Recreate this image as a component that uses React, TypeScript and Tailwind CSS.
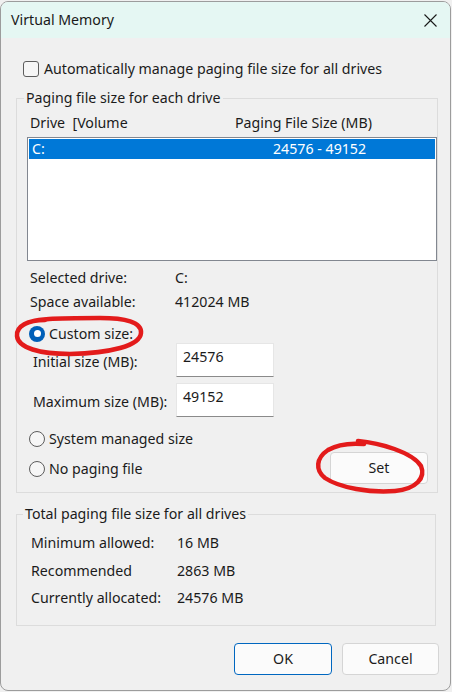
import React from "react";

const font = "font-['Segoe_UI','Noto_Sans',sans-serif]";

function Radio({ checked }: { checked?: boolean }) {
  return checked ? (
    <span className="w-[16px] h-[16px] rounded-full bg-[#005fb8] flex items-center justify-center shrink-0">
      <span className="w-[7px] h-[7px] rounded-full bg-white" />
    </span>
  ) : (
    <span className="w-[16px] h-[16px] rounded-full border border-[#5d5d5d] bg-[#f6f6f6] shrink-0" />
  );
}

export default function App() {
  return (
    <div className={`relative w-[452px] h-[692px] bg-[#f0f0f0] overflow-hidden ${font} text-[14.2px] text-[#1b1b1b]`}>
      {/* parent dialog fragments peeking at the very top */}
      <div className="h-[1px] overflow-hidden">
        <div className="-mt-[14px] h-[16px] flex text-[14px] leading-[16px] text-[#333]">
          <span className="ml-[-8px]">Visual Effects</span>
          <span className="ml-[60px]">Data Execution Prevention</span>
        </div>
      </div>

      {/* window */}
      <div className="w-[451px] h-[690px] border border-[#9c9c9c] rounded-[8px] overflow-hidden bg-[#f0f0f0] flex flex-col">
        {/* title bar */}
        <div className="h-[36px] bg-[#e5f7f3] flex items-center justify-between pl-[10px] pr-[13px] shrink-0">
          <span className="text-[14.2px] text-[#1a1a1a]">Virtual Memory</span>
          <svg width="13" height="13" viewBox="0 0 13 13">
            <path d="M0.5 0.5 L12.5 12.5 M12.5 0.5 L0.5 12.5" stroke="#1a1a1a" strokeWidth="1.1" fill="none" />
          </svg>
        </div>

        {/* body */}
        <div className="pl-[15px] pr-[14px] flex flex-col">
          {/* checkbox row */}
          <div className="mt-[21px] h-[20px] flex items-center ml-[7px]">
            <span className="w-[16px] h-[16px] rounded-[3px] border border-[#5d5d5d] bg-[#f6f6f6] shrink-0" />
            <span className="ml-[5px]">Automatically manage paging file size for all drives</span>
          </div>

          {/* group 1 */}
          <fieldset className="mt-[9px] border border-[#dcdcdc] pb-[13px]">
            <legend className="ml-[7px] px-[2px] h-[20px] leading-[20px]">Paging file size for each drive</legend>
            <div className="mt-[5px] h-[20px] flex items-center pl-[13px]">
              <span className="w-[205px]">Drive&nbsp;&nbsp;[Volume</span>
              <span>Paging File Size (MB)</span>
            </div>
            <div className="mt-[4px] ml-[10px] w-[410px] h-[124px] border border-[#828790] bg-white p-[1px]">
              <div className="h-[20px] bg-[#0078d7] text-white flex items-center pl-[3px]">
                <span className="w-[241px]">C:</span>
                <span>24576 - 49152</span>
              </div>
            </div>

            <div className="mt-[7px] h-[20px] flex items-center pl-[13px]">
              <span className="w-[145px]">Selected drive:</span>
              <span>C:</span>
            </div>
            <div className="mt-[4px] h-[20px] flex items-center pl-[13px]">
              <span className="w-[145px]">Space available:</span>
              <span>412024 MB</span>
            </div>

            <div className="mt-[12px] h-[19px] flex items-center pl-[12px]">
              <Radio checked />
              <span className="ml-[4px]">Custom size:</span>
            </div>
            <div className="h-[34px] flex items-center pl-[16px]">
              <span className="w-[143px] mt-[4px]">Initial size (MB):</span>
              <div className="w-[98px] h-[34px] bg-white border border-[#e6e6e6] border-b-[#8a8a8a] pl-[6px] pt-[3px] leading-[20px]">24576</div>
            </div>
            <div className="mt-[6px] h-[34px] flex items-center pl-[16px]">
              <span className="w-[143px] mt-[4px]">Maximum size (MB):</span>
              <div className="w-[98px] h-[34px] bg-white border border-[#e6e6e6] border-b-[#8a8a8a] pl-[6px] pt-[3px] leading-[20px]">49152</div>
            </div>

            <div className="mt-[12px] h-[20px] flex items-center pl-[12px]">
              <Radio />
              <span className="ml-[4px]">System managed size</span>
            </div>
            <div className="mt-[10px] h-[20px] flex items-center justify-between pl-[12px] pr-[9px]">
              <div className="flex items-center">
                <Radio />
                <span className="ml-[4px]">No paging file</span>
              </div>
              <div className="w-[98px] h-[32px] -mt-[2px] rounded-[4px] border border-[#d5d5d5] bg-[#fbfbfb] flex items-center justify-center">
                Set
              </div>
            </div>
          </fieldset>

          {/* group 2 */}
          <fieldset className="mt-[11px] border border-[#dcdcdc] pb-[17px]">
            <legend className="ml-[6px] px-[2px] h-[20px] leading-[20px]">Total paging file size for all drives</legend>
            <div className="mt-[9px] h-[20px] flex items-center pl-[14px]">
              <span className="w-[146px]">Minimum allowed:</span>
              <span>16 MB</span>
            </div>
            <div className="mt-[8px] h-[20px] flex items-center pl-[14px]">
              <span className="w-[146px]">Recommended</span>
              <span>2863 MB</span>
            </div>
            <div className="mt-[7px] h-[20px] flex items-center pl-[14px]">
              <span className="w-[146px]">Currently allocated:</span>
              <span>24576 MB</span>
            </div>
          </fieldset>

          {/* buttons */}
          <div className="mt-[17px] flex justify-end gap-[10px] -mr-[3px]">
            <div className="w-[98px] h-[32px] rounded-[4px] border border-[#0067c0] bg-[#fbfbfb] flex items-center justify-center">OK</div>
            <div className="w-[97px] h-[32px] rounded-[4px] border border-[#d5d5d5] bg-[#fbfbfb] flex items-center justify-center">Cancel</div>
          </div>
        </div>
      </div>

      {/* red annotations */}
      <svg className="absolute inset-0 pointer-events-none" width="452" height="692" viewBox="0 0 452 692">
        <path
          d="M22 326 C30 318 60 318 100 318 C125 318 142 322 141 333 C140 346 110 353 70 354 C40 354 18 348 17 336 C16 326 28 320 45 320"
          stroke="#e31b1b" strokeWidth="4.5" fill="none" strokeLinecap="round" strokeLinejoin="round"
        />
        <path
          d="M358 441 C380 443 412 452 421 466 C426 478 416 489 395 491 C370 493 340 488 325 478 C315 470 316 458 328 450 C338 444 352 443 364 444"
          stroke="#e31b1b" strokeWidth="4.5" fill="none" strokeLinecap="round" strokeLinejoin="round"
        />
      </svg>
    </div>
  );
}
